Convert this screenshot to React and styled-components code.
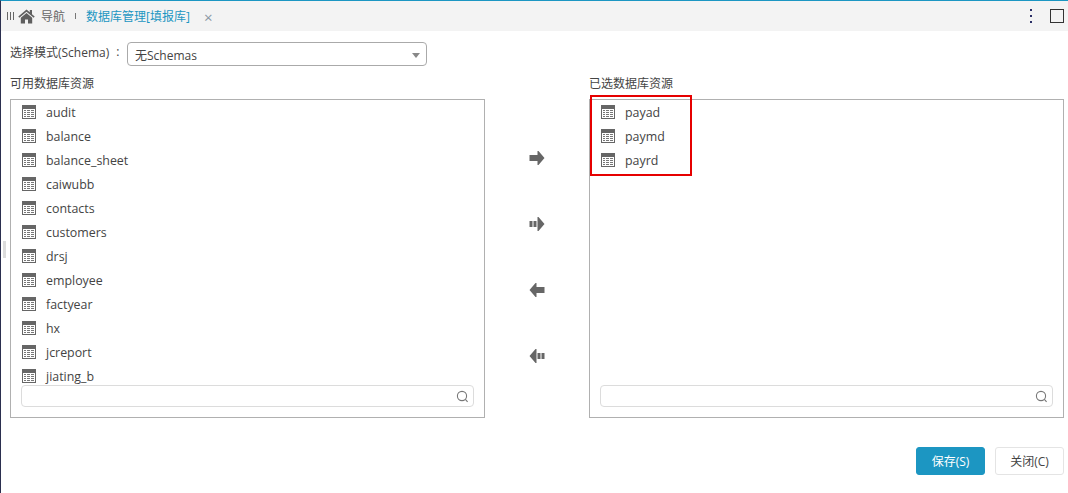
import React from "react";
import styled, { createGlobalStyle } from "styled-components";

const Global = createGlobalStyle`
  html, body { margin: 0; padding: 0; background: #fff; }
  body { font-family: "Open Sans", "Noto Sans CJK SC", sans-serif; font-size: 12px; color: #444; }
`;
const Page = styled.div`
  position: relative; width: 1068px; height: 493px; box-sizing: border-box; overflow: hidden;
  border-left: 1px solid #2b2f4f; border-top: 1px solid #1b96c2; background: #fff;
  display: flex; flex-direction: column;
`;
const TabBar = styled.div`
  flex: none; height: 30px; background: #f3f3f3; display: flex; align-items: center; padding-left: 6px;
`;
const Grip = styled.span`
  width: 7px; height: 8px; margin-right: 4px;
  background: repeating-linear-gradient(90deg, #666 0 1px, transparent 1px 3px);
`;
const Nav = styled.span`margin-left: 6px; color: #666; font-size: 12px; line-height: 16px; position: relative; top: 1px;`;
const Sep = styled.span`width: 1px; height: 6px; background: #777; margin: 0 10px 0 10px;`;
const ActiveTab = styled.span`color: #1c96c2; font-size: 12px; line-height: 16px; position: relative; top: 1px;`;
const Close = styled.span`margin-left: 14px; color: #8a97a3; font-size: 15px; line-height: 16px; margin-top: 1px;`;
const Spacer = styled.span`flex: 1;`;
const Kebab = styled.span`
  display: flex; flex-direction: column; gap: 4px; margin-right: 18px;
  i { display: block; width: 2px; height: 2px; background: #2a2f66; }
`;
const Maximize = styled.span`
  width: 12px; height: 12px; border: 1px solid #333; margin-right: 4px;
`;
const Body = styled.main`flex: 1; display: flex; flex-direction: column; padding: 11px 3px 0 9px;`;
const SchemaRow = styled.div`display: flex; align-items: center; height: 24px;`;
const SchemaLabel = styled.label`
  width: 117px; font-size: 12px; color: #444; position: relative; top: -2px;
  display: flex; gap: 7px;
`;
const Select = styled.div`
  width: 300px; height: 24px; box-sizing: border-box; border: 1px solid #aaa; border-radius: 4px;
  display: flex; align-items: center; justify-content: space-between; padding: 2px 6px 0 7px;
  font-size: 12px; color: #444;
`;
const Caret = styled.span`
  width: 0; height: 0; border-left: 4px solid transparent; border-right: 4px solid transparent;
  border-top: 5px solid #888; margin-top: 1px;
`;
const Columns = styled.div`
  margin-top: 9px; display: grid; grid-template-columns: 475px 104px 475px;
`;
const Column = styled.section`display: flex; flex-direction: column;`;
const Title = styled.h3`margin: 0; height: 17px; line-height: 17px; font-size: 12px; font-weight: 400; color: #444;`;
const Panel = styled.div`
  margin-top: 7px; height: 319px; box-sizing: border-box; border: 1px solid #b0b0b0;
  display: flex; flex-direction: column; padding: 0 10px 10px 10px;
`;
const List = styled.ul`
  flex: 1; min-height: 0; margin: 0; padding: 0; list-style: none; overflow: hidden;
`;
const Row = styled.li`
  height: 24px; display: flex; align-items: center; gap: 10px; padding-left: 1px;
  font-size: 12.4px; color: #444;
`;
const Search = styled.div`
  flex: none; height: 22px; box-sizing: border-box; border: 1px solid #dcdcdc; border-radius: 4px;
  display: flex; align-items: center; justify-content: flex-end; padding-right: 4px;
`;
const Arrows = styled.div`
  display: flex; flex-direction: column; align-items: center; padding-top: 75px; gap: 50px;
`;
const ArrowBtn = styled.button`
  width: 18px; height: 16px; padding: 0; border: 0; background: none; display: flex;
`;
const Footer = styled.footer`
  margin-top: 29px; display: flex; justify-content: flex-end; gap: 10px; margin-right: 1px;
`;
const Btn = styled.button`
  width: 69px; height: 28px; box-sizing: border-box; border-radius: 3px; font: inherit; font-size: 12px; padding: 0;
  color: ${p => (p.$primary ? "#fff" : "#444")};
  background: ${p => (p.$primary ? "#1c96c2" : "#fff")};
  border: 1px solid ${p => (p.$primary ? "#1c96c2" : "#e4e4e4")};
`;
const Handle = styled.span`
  position: absolute; left: 2px; top: 240px; width: 3px; height: 17px; background: #dcdcdc;
`;
const Highlight = styled.span`
  position: absolute; left: 589px; top: 94px; width: 102px; height: 81px; box-sizing: border-box;
  border: 2px solid #e60000; pointer-events: none;
`;

const HomeIcon = () => (
  <svg width="17" height="15" viewBox="0 0 17 15">
    <path fill="#5f5f5f" d="M8.5 0.5 0.3 7.5l1 1.2L8.5 2.7l7.2 6 1-1.2-2.7-2.3V1h-2.2v2.2z" />
    <path fill="#5f5f5f" d="M8.5 4 2.8 8.8V14.5H7v-4h3v4h4.2V8.8z" />
  </svg>
);
const TableIcon = () => (
  <svg width="14" height="14" viewBox="0 0 14 14" style={{ flex: "none" }}>
    <rect x="0" y="0" width="14" height="14" fill="#666" />
    <rect x="1" y="4" width="12" height="9" fill="#fff" />
    <path fill="#777" d="M2 5h2v1H2zM5 5h3v1H5zM9 5h3v1H9zM2 7h2v1H2zM5 7h3v1H5zM9 7h3v1H9zM2 9h2v1H2zM5 9h3v1H5zM9 9h3v1H9zM2 11h2v1H2zM5 11h3v1H5zM9 11h3v1H9z" />
  </svg>
);
const SearchIcon = () => (
  <svg width="13" height="13" viewBox="0 0 13 13" fill="none" stroke="#777" strokeWidth="1.1">
    <circle cx="6" cy="6" r="4.6" />
    <path d="M9.4 9.4 11.6 11.8" />
  </svg>
);
const arrows = {
  right: "M0 5h8V1l1 0 6 7-6 7-1 0V11H0z",
  rightAll: "M0 5h3v6H0zM4 5h3v6H4zM8 1l1 0 6 7-6 7-1 0z",
  left: "M15 5H7V1L6 1 0 8l6 7 1 0V11h8z",
  leftAll: "M15 5h-3v6h3zM11 5H8v6h3zM7 1 6 1 0 8l6 7 1 0z",
};
const Arrow = ({ d }) => (
  <ArrowBtn>
    <svg width="18" height="16" viewBox="-1.5 0 18 16"><path fill="#666" d={d} /></svg>
  </ArrowBtn>
);
const TableRow = ({ name }) => (
  <Row><TableIcon />{name}</Row>
);

const available = ["audit","balance","balance_sheet","caiwubb","contacts","customers","drsj","employee","factyear","hx","jcreport","jiating_b"];
const selected = ["payad","paymd","payrd"];

export default function App() {
  return (
    <Page>
      <Global />
      <TabBar>
        <Grip />
        <HomeIcon />
        <Nav>导航</Nav>
        <Sep />
        <ActiveTab>数据库管理[填报库]</ActiveTab>
        <Close>×</Close>
        <Spacer />
        <Kebab><i /><i /><i /></Kebab>
        <Maximize />
      </TabBar>
      <Body>
        <SchemaRow>
          <SchemaLabel>选择模式(Schema)<span>:</span></SchemaLabel>
          <Select>无Schemas<Caret /></Select>
        </SchemaRow>
        <Columns>
          <Column>
            <Title>可用数据库资源</Title>
            <Panel>
              <List>{available.map(n => <TableRow key={n} name={n} />)}</List>
              <Search><SearchIcon /></Search>
            </Panel>
          </Column>
          <Arrows>
            <Arrow d={arrows.right} />
            <Arrow d={arrows.rightAll} />
            <Arrow d={arrows.left} />
            <Arrow d={arrows.leftAll} />
          </Arrows>
          <Column>
            <Title>已选数据库资源</Title>
            <Panel>
              <List>{selected.map(n => <TableRow key={n} name={n} />)}</List>
              <Search><SearchIcon /></Search>
            </Panel>
          </Column>
        </Columns>
        <Footer>
          <Btn $primary>保存(S)</Btn>
          <Btn>关闭(C)</Btn>
        </Footer>
      </Body>
      <Handle />
      <Highlight />
    </Page>
  );
}
